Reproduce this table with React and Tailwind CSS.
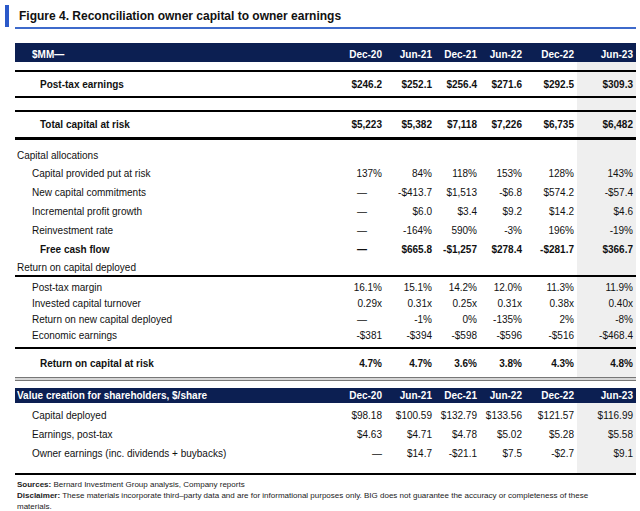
import React from "react";

const COLS = "grid grid-cols-[320px_50px_50px_45px_45px_52px_59px]";
const GRAY = "bg-[#efefef]";

function Spacer({ h }) {
  return (
    <div className={`${COLS} ${h}`}>
      <div className="col-span-6" />
      <div className={GRAY} />
    </div>
  );
}

function Line({ cls }) {
  return <div className={cls} />;
}

function Row({ label, vals, bold, pl, h, dashFirst }) {
  return (
    <div className={`${COLS} ${h} items-center ${bold ? "font-bold" : ""}`}>
      <div className={`${pl} whitespace-nowrap`}>{label}</div>
      {vals.map((v, i) => (
        <div
          key={i}
          className={`h-full flex items-center justify-end ${
            i === 0 && v === "—" && dashFirst ? "pr-[18px]" : "pr-[3px]"
          } ${i === 5 ? GRAY : ""}`}
        >
          {v}
        </div>
      ))}
    </div>
  );
}

function Header({ label, pl, h }) {
  const heads = ["Dec-20", "Jun-21", "Dec-21", "Jun-22", "Dec-22", "Jun-23"];
  return (
    <div className={`${COLS} ${h} bg-[#0c1f52] text-white font-bold items-end`}>
      <div className={`${pl} whitespace-nowrap leading-[12px]`}>{label}</div>
      {heads.map((v) => (
        <div key={v} className="text-right pr-[3px] leading-[12px]">
          {v}
        </div>
      ))}
    </div>
  );
}

export default function App() {
  return (
    <div className="w-[640px] h-[511px] bg-white overflow-hidden font-['Liberation_Sans',Arial,sans-serif] text-[#111]">
      <div className="flex items-center h-[22px] mt-[5px]">
        <div className="w-[4px] h-[22px] ml-[5px] bg-[#2b59c9]" />
        <div className="ml-[10px] text-[12px] font-bold leading-[14px]">
          Figure 4. Reconciliation owner capital to owner earnings
        </div>
      </div>
      <div className="ml-[15px] mr-[4px] text-[10px]">
        <div className="h-[2px] bg-[#3e6acb] mt-[0px]" />
        <div className="h-[14px]" />
        <Header label="$MM—" pl="pl-[17px]" h="h-[19px] pb-[1px]" />
        <Spacer h="h-[8px]" />
        <Line cls="h-[2px] bg-black" />
        <Row label="Post-tax earnings" bold pl="pl-[25px]" h="h-[24px]" vals={["$246.2", "$252.1", "$256.4", "$271.6", "$292.5", "$309.3"]} />
        <Line cls="h-[2px] bg-black" />
        <Spacer h="h-[12px]" />
        <Line cls="h-[2px] bg-black" />
        <Row label="Total capital at risk" bold pl="pl-[25px]" h="h-[25px]" vals={["$5,223", "$5,382", "$7,118", "$7,226", "$6,735", "$6,482"]} />
        <Line cls="h-[3px] bg-black" />
        <Spacer h="h-[6px]" />
        <Row label="Capital allocations" pl="pl-[2px]" h="h-[18px]" vals={["", "", "", "", "", ""]} />
        <Row label="Capital provided put at risk" pl="pl-[17px]" h="h-[19px]" vals={["137%", "84%", "118%", "153%", "128%", "143%"]} />
        <Row label="New capital commitments" dashFirst pl="pl-[17px]" h="h-[19px]" vals={["—", "-$413.7", "$1,513", "-$6.8", "$574.2", "-$57.4"]} />
        <Row label="Incremental profit growth" dashFirst pl="pl-[17px]" h="h-[19px]" vals={["—", "$6.0", "$3.4", "$9.2", "$14.2", "$4.6"]} />
        <Row label="Reinvestment rate" dashFirst pl="pl-[17px]" h="h-[19px]" vals={["—", "-164%", "590%", "-3%", "196%", "-19%"]} />
        <Row label="Free cash flow" bold dashFirst pl="pl-[25px]" h="h-[19px]" vals={["—", "$665.8", "-$1,257", "$278.4", "-$281.7", "$366.7"]} />
        <Row label="Return on capital deployed" pl="pl-[2px]" h="h-[16px]" vals={["", "", "", "", "", ""]} />
        <Line cls="h-[2px] bg-black" />
        <Spacer h="h-[2px]" />
        <Row label="Post-tax margin" pl="pl-[17px]" h="h-[16px]" vals={["16.1%", "15.1%", "14.2%", "12.0%", "11.3%", "11.9%"]} />
        <Row label="Invested capital turnover" pl="pl-[17px]" h="h-[16px]" vals={["0.29x", "0.31x", "0.25x", "0.31x", "0.38x", "0.40x"]} />
        <Row label="Return on new capital deployed" dashFirst pl="pl-[17px]" h="h-[16px]" vals={["—", "-1%", "0%", "-135%", "2%", "-8%"]} />
        <Row label="Economic earnings" pl="pl-[17px]" h="h-[16px]" vals={["-$381", "-$394", "-$598", "-$596", "-$516", "-$468.4"]} />
        <Spacer h="h-[4px]" />
        <Line cls="h-[2px] bg-black" />
        <Row label="Return on capital at risk" bold pl="pl-[25px]" h="h-[28px]" vals={["4.7%", "4.7%", "3.6%", "3.8%", "4.3%", "4.8%"]} />
        <div className="h-[4px] border-t border-b border-[#777] bg-[#d6d6d6]" />
        <div className="h-[7px]" />
        <Header label="Value creation for shareholders, $/share" pl="pl-[2px]" h="h-[15px] pb-[1px]" />
        <Spacer h="h-[3px]" />
        <Row label="Capital deployed" pl="pl-[17px]" h="h-[19px]" vals={["$98.18", "$100.59", "$132.79", "$133.56", "$121.57", "$116.99"]} />
        <Row label="Earnings, post-tax" pl="pl-[17px]" h="h-[19px]" vals={["$4.63", "$4.71", "$4.78", "$5.02", "$5.28", "$5.58"]} />
        <Row label="Owner earnings (inc. dividends + buybacks)" pl="pl-[17px]" h="h-[19px]" vals={["—", "$14.7", "-$21.1", "$7.5", "-$2.7", "$9.1"]} />
        <Spacer h="h-[10px]" />
        <Line cls="h-[2px] bg-black" />
        <div className="pl-[2px] pt-[4px] text-[8px] leading-[11px] text-[#222] whitespace-nowrap">
          <p>
            <span className="font-bold">Sources:</span> Bernard Investment Group analysis, Company reports
          </p>
          <p>
            <span className="font-bold">Disclaimer:</span> These materials incorporate third–party data and are for informational purposes only. BIG does not guarantee the accuracy or completeness of these
          </p>
          <p>materials.</p>
        </div>
      </div>
    </div>
  );
}
